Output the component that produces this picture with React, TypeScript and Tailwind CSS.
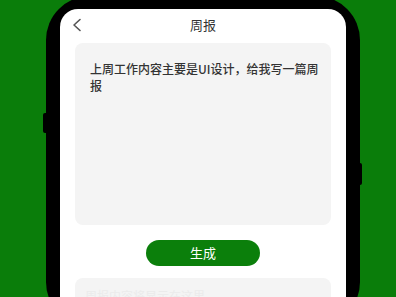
import React from 'react';

const font = { fontFamily: '"Noto Sans CJK SC", "Noto Sans", sans-serif' };

export default function App() {
    return (
        <div className="w-[396px] h-[297px] overflow-hidden bg-[#0a7d0a] flex pl-[46px]" style={font}>
            {/* phone body */}
            <div className="relative w-[314px] h-[330px] mt-[-4px] shrink-0 bg-black rounded-[44px] pt-[13px] px-[14px]">
                <div className="absolute left-[-3px] top-[117px] w-[4px] h-[20px] bg-black rounded-l-[2px]" />
                <div className="absolute right-[-2px] top-[167px] w-[3px] h-[22px] bg-black rounded-r-[2px]" />

                <div className="h-full bg-white rounded-t-[18px] overflow-hidden">
                    {/* header */}
                    <div className="relative h-[34px] flex items-start justify-center pt-[7px]">
                        <svg className="absolute left-[12px] top-[9px]" width="10" height="14" viewBox="0 0 10 14" fill="none">
                            <path d="M8 1.5 L2 7 L8 12.5" stroke="#555" strokeWidth="1.6" strokeLinecap="round" strokeLinejoin="round" />
                        </svg>
                        <span className="text-[13px] leading-[17px] text-[#333]">周报</span>
                    </div>

                    <div className="px-[15px] flex flex-col">
                        <div className="shrink-0 h-[182px] bg-[#f4f4f4] rounded-[8px] pl-[15px] pr-[8px] pt-[17px]">
                            <p className="text-[12px] leading-[17px] font-medium text-[#333]">
                                上周工作内容主要是UI设计，给我写一篇周报
                            </p>
                        </div>

                        <button className="shrink-0 mt-[15px] mx-auto w-[114px] h-[26px] rounded-full bg-[#0b7f0b] text-white text-[13px] flex items-center justify-center">
                            生成
                        </button>

                        <div className="shrink-0 mt-[12px] h-[80px] bg-[#f4f4f4] rounded-[8px] px-[10px] pt-[9px]">
                            <p className="text-[12px] leading-[17px] text-[#ebebeb]">周报内容将显示在这里</p>
                        </div>
                    </div>
                </div>
            </div>
        </div>
    );
}
